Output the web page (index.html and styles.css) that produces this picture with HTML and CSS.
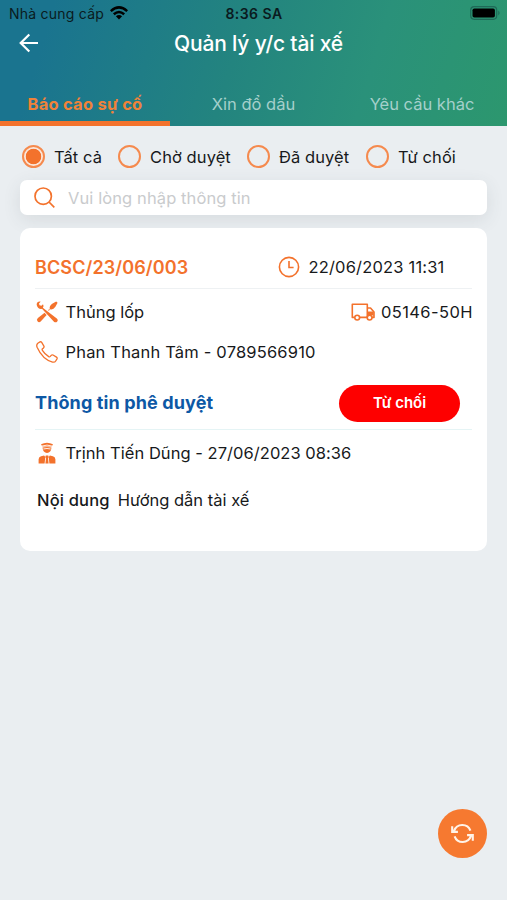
FILE: index.html
```html
<!DOCTYPE html>
<html lang="vi">
<head>
<meta charset="utf-8">
<meta name="viewport" content="width=device-width, initial-scale=1">
<title>Quản lý y/c tài xế</title>
<link rel="stylesheet" href="styles.css">
</head>
<body>
<header class="header">
  <div class="status">
    <div class="carrier"><span class="carrier-name">Nhà cung cấp</span>
      <svg class="wifi" viewBox="0 0 18 14"><g fill="none" stroke="#000" stroke-width="2.5"><path d="M.8 5.1Q9-2.3 17.2 5.1"/><path d="M3.8 8.3Q9 3.7 14.2 8.3"/></g><path d="M5.9 10.2Q9 7.8 12.1 10.2L9 13.5z"/></svg>
    </div>
    <span class="time">8:36 SA</span>
    <svg class="battery" viewBox="0 0 31 14"><rect x=".7" y=".7" width="26" height="12.6" rx="3.5" fill="none" stroke="#1f6a58" stroke-width="1.2"/><rect x="2.5" y="2.5" width="22.4" height="9" rx="1.8"/><path d="M28.3 4.5q2.5 2.5 0 5z" fill="#1f6a58"/></svg>
  </div>
  <div class="titlebar">
    <svg class="back" viewBox="0 0 20 20"><path d="M19 10H2M10.3 1.5L1.7 10l8.6 8.5"/></svg>
    <h1 class="title">Quản lý y/c tài xế</h1>
  </div>
  <nav class="tabs">
    <a class="tab active">Báo cáo sự cố</a>
    <a class="tab">Xin đổ dầu</a>
    <a class="tab">Yêu cầu khác</a>
  </nav>
</header>
<main class="main">
  <div class="filters">
    <label class="filter f1"><i class="radio checked"></i><span>Tất cả</span></label>
    <label class="filter f2"><i class="radio"></i><span>Chờ duyệt</span></label>
    <label class="filter f3"><i class="radio"></i><span>Đã duyệt</span></label>
    <label class="filter f4"><i class="radio"></i><span>Từ chối</span></label>
  </div>
  <div class="search">
    <svg class="ic-search" viewBox="0 0 21 21"><circle cx="9.2" cy="9.2" r="8.2"/><path d="M15 15l5.3 5.3"/></svg>
    <span class="placeholder">Vui lòng nhập thông tin</span>
  </div>
  <article class="card">
    <div class="row row-head">
      <span class="code">BCSC/23/06/003</span>
      <div class="date">
        <svg class="ic-clock" viewBox="0 0 22 22"><circle cx="11" cy="11" r="9.6"/><path d="M11 5v6.5h4.6"/></svg>
        <span class="date-text">22/06/2023 11:31</span>
      </div>
    </div>
    <div class="row row-issue">
      <svg class="ic" viewBox="0 0 22 22"><g fill="#f3722c"><path d="M.8 4.2C.2 1.9 2 .2 4.6.7L3 2.6l.5 1.7 2 .4L7 3.2c.8 1.5.5 2.7-.2 3.6L20.8 17.5q1.6 1.5.4 3t-3 .4L6 7.8C4 8.8 1.4 7 .8 4.2z"/><path d="M13.8 8.3q-.8-3.4 2.4-5.6l4-2.3 1.4 1.4-2.2 4q-2.2 3.2-5 2.5L12.8 9.8l-.9-.9z"/><path d="M8.6 11.8L1.9 16.9q-1.8 1.7-.4 3.4t3.2.2l5.9-6.5z"/></g></svg>
      <span class="issue">Thủng lốp</span>
      <div class="truck">
        <svg class="ic-truck" viewBox="0 0 24 18"><g fill="none" stroke="#f3722c" stroke-width="1.6" stroke-linejoin="round"><path d="M3.5 14.4H1.3V1.2h15v13.2H9"/><path d="M16.3 5h3.2l3.5 4v5.4h-2"/><circle cx="6.2" cy="14.6" r="2.4"/><circle cx="18.6" cy="14.6" r="2.4"/></g><path d="M17 8.5h5.7V13l-2-1H17z" fill="#f3722c"/></svg>
        <span class="plate">05146-50H</span>
      </div>
    </div>
    <div class="row row-phone">
      <svg class="ic" viewBox="0 0 22 22"><path fill="none" stroke="#f3722c" stroke-width="1.3" stroke-linejoin="round" d="M1.8 2.2L4 .9q1-.5 1.7.5l2.2 3.7q.5 1-.4 1.8l-1 .9q-.7.7-.1 1.6 2.3 3.8 6.3 6.2.9.5 1.6-.2l.9-1q.8-.9 1.8-.4l3.5 2.1q1 .7.5 1.7L19.7 20q-.9 1.5-3.2 1.1Q6.6 18.5 1.1 6.3.1 3.8 1.8 2.2z"/></svg>
      <span class="driver">Phan Thanh Tâm - 0789566910</span>
    </div>
    <div class="row row-approval">
      <span class="approval">Thông tin phê duyệt</span>
      <span class="badge">Từ chối</span>
    </div>
    <div class="row row-approver">
      <svg class="ic" viewBox="0 0 22 22"><g fill="#f3722c"><path d="M5 2.2Q11-.8 17 2.2L15.7 4.5H6.3z"/><path d="M6.5 5.6q4.5-1 9 0-.5 5.4-4.5 5.4T6.5 5.6z"/><path d="M2.6 21.4v-4.1q.2-2.4 2.5-3l3-.9 1.2 1.7-.7 6.3zM19.4 21.4v-4.1q-.2-2.4-2.5-3l-3-.9-1.2 1.7.7 6.3zM9.8 13.5h2.4l.5 1.4-.7 1 .6 5.5H9.4l.6-5.5-.7-1z"/></g><path d="M5.7 4.1Q11 2.1 16.3 4.1M7.3 7q3.7-1 7.4 0" stroke="#fff" stroke-width=".9" fill="none"/></svg>
      <span class="approver">Trịnh Tiến Dũng - 27/06/2023 08:36</span>
    </div>
    <div class="row row-content">
      <span class="content-label">Nội dung</span>
      <span class="content-text">Hướng dẫn tài xế</span>
    </div>
  </article>
</main>
<button class="fab" aria-label="Tải lại"><svg viewBox="0 0 26 22"><path d="M4.2 8.2A9.1 9.1 0 0 1 21.3 8M21.8 13.8A9.1 9.1 0 0 1 4.7 14M2.2 3.3v6h6M23.8 18.7v-6h-6"/></svg></button>
</body>
</html>
```
FILE: styles.css
```css
* { box-sizing: border-box; }
body {
  margin: 0;
  min-height: 900px;
  background: #eaeef1;
  color: #17191b;
  font-family: Inter, "Noto Sans", sans-serif;
  font-size: 16.5px;
  line-height: 20px;
  white-space: nowrap;
}
svg { display: block; flex: none; }
.header {
  height: 126px;
  display: flex;
  flex-direction: column;
  background: linear-gradient(107deg, #1a748f 10%, #23847f 46%, #2a917a 72%, #2c976e 100%);
}
.status {
  height: 28px;
  padding: 0 6px 0 9px;
  display: grid;
  grid-template-columns: 1fr auto 1fr;
  align-items: center;
  font-size: 14px;
  color: #0a1b20;
}
.carrier { display: flex; align-items: center; gap: 6px; letter-spacing: .24px; }
.wifi { width: 18px; height: 14px; margin-top: -2px; }
.time { font-weight: 600; letter-spacing: .45px; margin-left: -2px; }
.battery { width: 31px; height: 14px; justify-self: end; margin-top: -1px; }
.titlebar {
  height: 31px;
  display: grid;
  grid-template-columns: 40px 1fr 30px;
  align-items: center;
  padding: 0 19px;
}
.back { width: 20px; height: 20px; fill: none; stroke: #fff; stroke-width: 2.2; }
.title { margin: 0; padding-top: 2px; text-align: center; color: #fff; font-size: 21px; letter-spacing: -.17px; font-weight: 500; line-height: 26px; }
.tabs { flex: 1; display: grid; grid-template-columns: 170px 167px 170px; margin-top: 22px; }
.tab { display: flex; align-items: center; justify-content: center; color: #a5d0cb; height: 46px; padding-top: 1px; }
.tab.active { color: #f08239; font-weight: 700; letter-spacing: .24px; border-bottom: 5px solid #f3722c; padding-top: 6px; }
.main { padding: 18px 20px 0 20px; }
.filters { height: 25px; display: flex; align-items: center; padding-left: 2px; }
.filter { display: flex; align-items: center; gap: 9px; letter-spacing: .08px; }
.f1 { width: 96px; }
.f2 { width: 129px; }
.f3 { width: 119px; }
.radio { width: 23px; height: 23px; flex: none; border: 2px solid #f58a4e; border-radius: 50%; }
.radio.checked { background: radial-gradient(circle, #f3722c 7.4px, #fbe6da 8.1px); }
.search {
  height: 35px;
  margin-top: 11px;
  padding-left: 14px;
  display: flex;
  align-items: center;
  gap: 13px;
  background: #fff;
  border-radius: 7px;
  box-shadow: 0 5px 18px rgba(60, 75, 85, .11);
}
.ic-search { width: 21px; height: 21px; fill: none; stroke: #f3722c; stroke-width: 1.7; }
.placeholder { color: #c9cbcd; letter-spacing: .1px; }
.card {
  height: 323px;
  margin-top: 13px;
  padding: 17px 15px 0;
  background: #fff;
  border-radius: 10px;
}
.row { display: flex; align-items: center; }
.row-head { height: 44px; padding-top: 1px; border-bottom: 1px solid #eef1f3; justify-content: space-between; }
.code { color: #f3722c; font-weight: 600; font-size: 18px; letter-spacing: .1px; padding-top: 1px; }
.date { width: 194.5px; display: flex; align-items: center; gap: 9px; letter-spacing: .18px; }
.ic-clock { width: 22px; height: 22px; fill: none; stroke: #f3722c; stroke-width: 1.6; }
.ic { width: 22px; height: 22px; margin: 0 8px 0 .5px; }
.row-issue { height: 46px; }
.truck { display: flex; align-items: center; gap: 6px; margin-left: auto; }
.ic-truck { width: 24px; height: 18px; }
.plate { letter-spacing: .42px; margin-right: -1px; }
.row-phone { height: 34px; }
.driver { letter-spacing: .18px; }
.row-approval { height: 61px; padding: 8px 12px 0 0; justify-content: space-between; border-bottom: 1px solid #e5f4f5; }
.approval { color: #0d58a5; font-size: 18px; font-weight: 700; letter-spacing: .12px; }
.badge {
  width: 121px;
  height: 37px;
  display: flex;
  align-items: center;
  justify-content: center;
  border-radius: 19px;
  background: #fe0000;
  color: #fff;
  font-size: 15px;
  font-weight: 600;
}
.row-approver { height: 46px; }
.approver { letter-spacing: .04px; }
.row-content { height: 48px; gap: 8px; padding-left: 2px; }
.content-label { font-weight: 500; letter-spacing: .18px; }
.fab {
  position: fixed;
  right: 20px;
  bottom: 42px;
  width: 49px;
  height: 49px;
  padding: 0;
  border: 0;
  border-radius: 50%;
  background: #f67930;
  display: flex;
  align-items: center;
  justify-content: center;
}
.fab svg { width: 25px; height: 21px; fill: none; stroke: #fff3e8; stroke-width: 2.2; }
```
